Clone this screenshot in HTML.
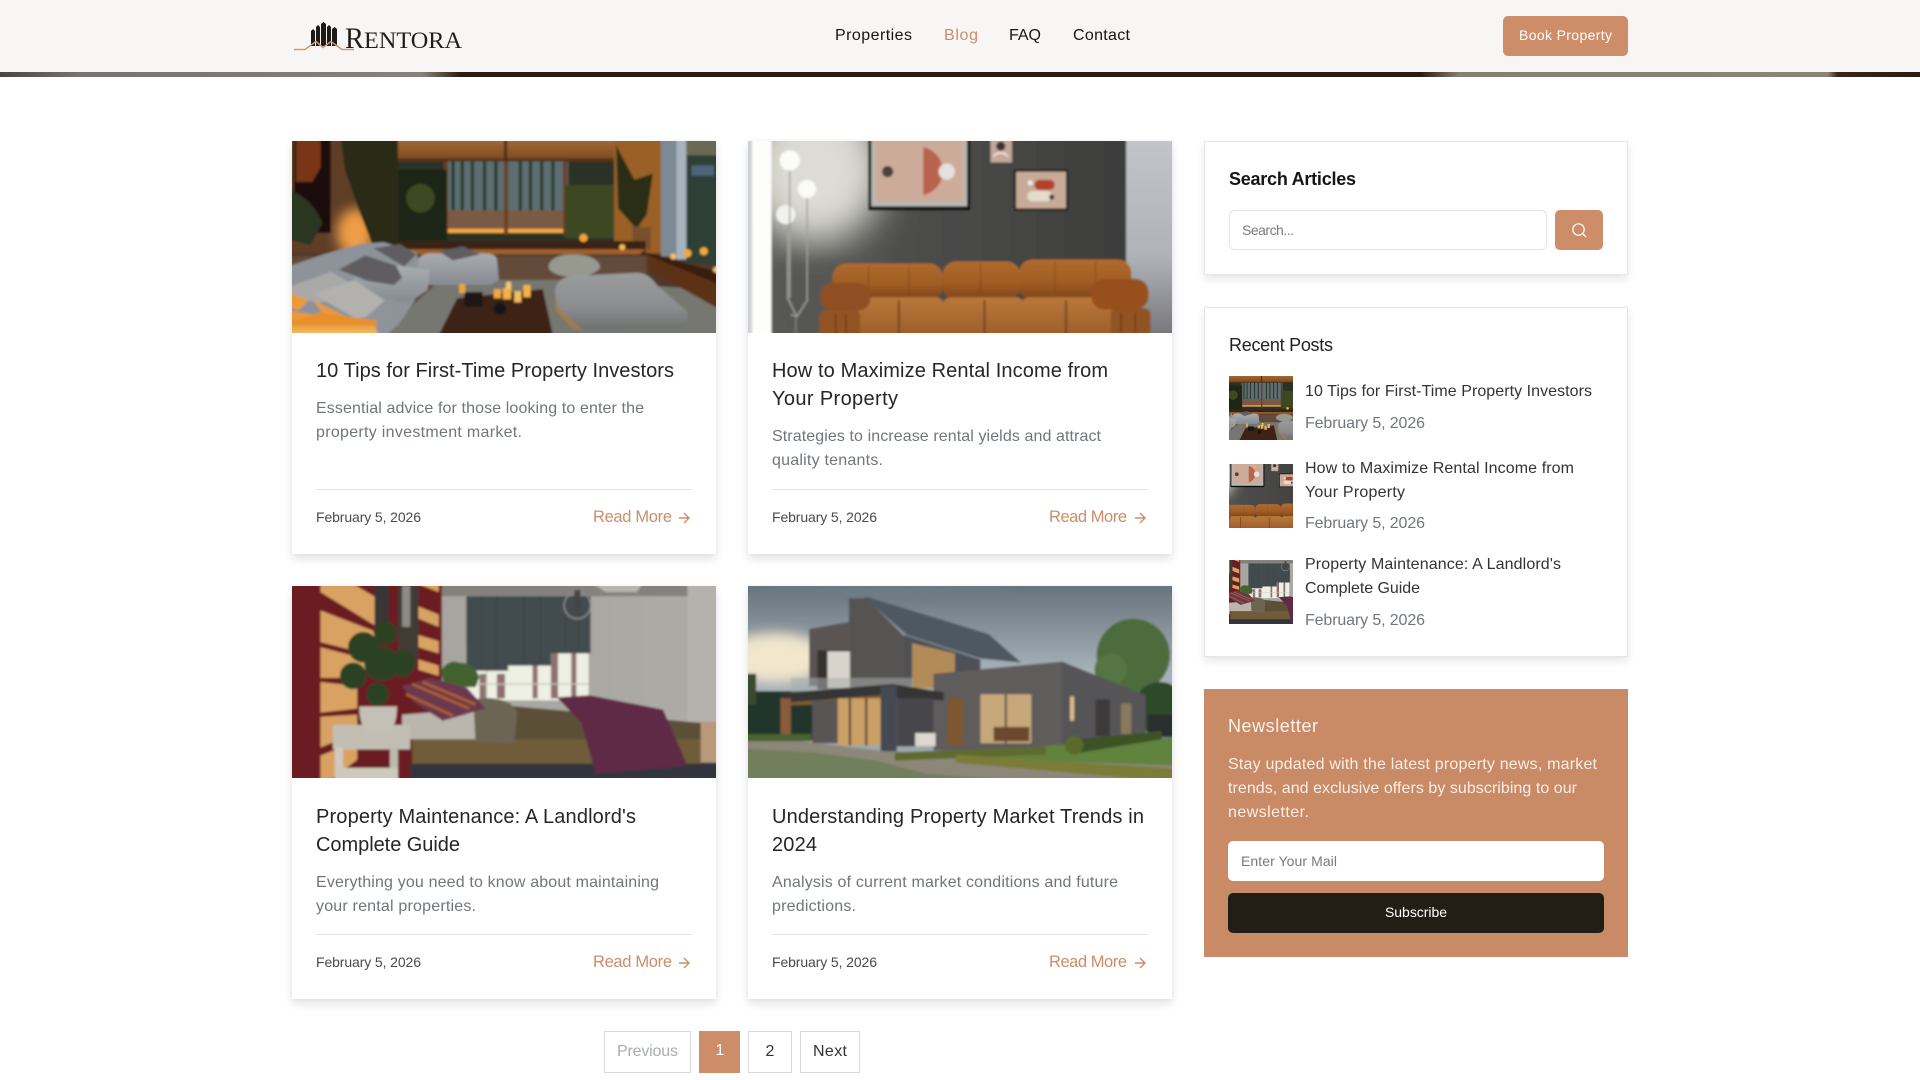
<!DOCTYPE html>
<html lang="en"><head><meta charset="utf-8"><title>Rentora Blog</title>
<style>
html,body{margin:0;padding:0;background:#fff;width:1920px;height:1080px;overflow:hidden}
.b{position:absolute;background:#fff;box-sizing:border-box}
.card{box-shadow:0 5px 9px rgba(0,0,0,.11),0 0 4px rgba(0,0,0,.05)}
.side{border:1px solid #e6e6e6;box-shadow:0 4px 8px rgba(0,0,0,.1)}
svg{position:absolute;left:0;top:0}
text{font-family:"Liberation Sans",sans-serif;white-space:pre}
.t{font-size:20px;fill:#262626}
.d{font-size:16px;fill:#70767c}
.dt{font-size:14px;fill:#4a4a4a}
.r{font-size:16.5px;fill:#cc8d68}
.st{font-size:16px;fill:#333}
.sd{font-size:16px;fill:#72777d}
.n{font-size:16px;fill:#151515}
.w{fill:#fff}
.nl{font-size:16px;fill:#fbeee6}
.ph{font-size:14px;fill:#7a7a7a}
.a{fill:none;stroke:#cc8d68;stroke-width:1.4}
</style></head><body>
<div class="b card" style="left:292px;top:141px;width:424px;height:413px"></div>
<div class="b card" style="left:748px;top:141px;width:424px;height:413px"></div>
<div class="b card" style="left:292px;top:586px;width:424px;height:413px"></div>
<div class="b card" style="left:748px;top:586px;width:424px;height:413px"></div>
<div class="b side" style="left:1204px;top:141px;width:424px;height:134px"></div>
<div class="b side" style="left:1204px;top:307px;width:424px;height:350px"></div>
<svg width="1920" height="1080" viewBox="0 0 1920 1080" xmlns="http://www.w3.org/2000/svg">
<defs>
<filter id="bl" x="-2%" y="-2%" width="104%" height="104%"><feGaussianBlur stdDeviation="1"/></filter>
<filter id="bl3" x="-40%" y="-40%" width="180%" height="180%"><feGaussianBlur stdDeviation="6"/></filter>
<filter id="bl9" x="-60%" y="-60%" width="220%" height="220%"><feGaussianBlur stdDeviation="18"/></filter>
<linearGradient id="strip" x1="0" x2="1" y1="0" y2="0">
<stop offset="0" stop-color="#4a4540"/><stop offset=".04" stop-color="#77736d"/><stop offset=".22" stop-color="#85827b"/><stop offset=".24" stop-color="#2a1c12"/><stop offset=".74" stop-color="#2a1c12"/><stop offset=".76" stop-color="#86806f"/><stop offset=".952" stop-color="#8a8475"/><stop offset=".957" stop-color="#3a2518"/><stop offset="1" stop-color="#2a1c12"/>
</linearGradient>
<linearGradient id="sky" x1="0" x2="0" y1="0" y2="1"><stop offset="0" stop-color="#66727b"/><stop offset=".45" stop-color="#a7b2b9"/><stop offset="1" stop-color="#98a4ac"/></linearGradient>
<linearGradient id="lth" x1="0" x2="0" y1="0" y2="1"><stop offset="0" stop-color="#b06c2e"/><stop offset=".55" stop-color="#a15c24"/><stop offset="1" stop-color="#7d4419"/></linearGradient>
<linearGradient id="lth2" x1="0" x2="0" y1="0" y2="1"><stop offset="0" stop-color="#b9783c"/><stop offset="1" stop-color="#9c5c28"/></linearGradient>
<linearGradient id="sofaL" x1="0" x2="0" y1="0" y2="1"><stop offset="0" stop-color="#e08a30"/><stop offset="1" stop-color="#f7c264"/></linearGradient>
<linearGradient id="blind" x1="0" x2="0" y1="0" y2="1"><stop offset="0" stop-color="#a56a34"/><stop offset="1" stop-color="#7a4a24"/></linearGradient>
<linearGradient id="cush" x1="0" x2="0" y1="0" y2="1"><stop offset="0" stop-color="#9a9c9c"/><stop offset=".6" stop-color="#8b8d8e"/><stop offset="1" stop-color="#6e7072"/></linearGradient>
<linearGradient id="seat" x1="0" x2="0" y1="0" y2="1"><stop offset="0" stop-color="#a9adb0"/><stop offset="1" stop-color="#858b91"/></linearGradient>
<linearGradient id="rightw" x1="0" x2="0" y1="0" y2="1"><stop offset="0" stop-color="#c2c4ca"/><stop offset=".6" stop-color="#b0b2b8"/><stop offset="1" stop-color="#77787c"/></linearGradient>
<linearGradient id="wall2" x1="0" x2="1" y1="0" y2="0"><stop offset="0" stop-color="#5c5c58"/><stop offset=".35" stop-color="#4e4e4c"/><stop offset="1" stop-color="#3d3d3b"/></linearGradient>
<linearGradient id="wallb" x1="0" x2="1" y1="0" y2="0"><stop offset="0" stop-color="#a3a29d"/><stop offset="1" stop-color="#aeaba6"/></linearGradient>

<g id="img1" filter="url(#bl)">
<rect width="424" height="192" fill="#50382a"/>
<rect width="110" height="112" fill="#5e3e28"/>
<ellipse cx="66" cy="92" rx="18" ry="24" fill="#ef9e45" filter="url(#bl3)"/>
<rect x="6" width="36" height="92" fill="#1f110c"/><path d="M8 0h24v28l-8 14H8z" fill="#7a3517"/>
<path d="M0 50q22 6 34 32l-12 22-22-6z" fill="#2c3520"/>
<path d="M52 0h62v60l-6 46H84L70 70 56 30z" fill="#2a2a17"/>
<rect x="108" width="214" height="21" fill="url(#blind)"/><rect x="108" y="19" width="214" height="4" fill="#5a3317"/><rect x="212" width="3" height="24" fill="#4e2c14"/>
<rect x="108" y="22" width="214" height="78" fill="#2a3128"/>
<rect x="155" y="22" width="120" height="50" fill="#5b6e6f"/>
<path d="M162 22v50M171 22v50M181 22v50M193 22v50M204 22v50M214 22v50M228 22v50M238 22v50M249 22v50M260 22v50" stroke="#2b342c" stroke-width="3"/>
<rect x="155" y="70" width="118" height="20" fill="#7a5a44"/>
<rect x="155" y="88" width="120" height="4" fill="#f6aa42"/>
<rect x="153" y="22" width="4" height="72" fill="#6a4022"/><rect x="212" y="22" width="4" height="72" fill="#6a4022"/><rect x="270" y="22" width="4" height="72" fill="#6a4022"/>
<path d="M108 30h48v70h-48z" fill="#1f2614"/><circle cx="130" cy="58" r="14" fill="#3c4a22"/>
<path d="M272 45h48v52h-48z" fill="#3c4624"/>
<rect x="320" width="46" height="112" fill="#9a6128"/>
<path d="M322 6l18 34 18-6-6 40-10 14-18-20z" fill="#2a2d18"/><rect x="338" y="86" width="18" height="22" fill="#7a4f2e"/>
<rect x="366" width="15" height="115" fill="#7d8a95"/><rect x="381" width="10" height="118" fill="#a7b3bd"/><rect x="391" width="33" height="122" fill="#2f3f36"/>
<rect x="391" y="0" width="33" height="16" fill="#6a6a52"/><rect x="396" y="26" width="22" height="10" fill="#4f6478"/>
<path d="M108 100h243v13H108z" fill="#3a2012"/><path d="M108 108h243l-6 5H108z" fill="#a1602a"/>
<path d="M0 115h352v77H0z" fill="#644b3a"/>
<path d="M150 138h115l158 10v44H90z" fill="#74776f"/>
<path d="M352 111l72 32v24l-72-40z" fill="#5c3318"/><path d="M352 111l72 20v12l-72-30z" fill="#3a1f10"/>
<circle cx="378" cy="115" r="3" fill="#f7c060"/><circle cx="392" cy="112" r="4" fill="#f2a83e"/><circle cx="408" cy="110" r="4" fill="#f2a83e"/><circle cx="420" cy="128" r="3" fill="#f6c06a"/><circle cx="328" cy="106" r="3" fill="#f5b85a"/><circle cx="290" cy="97" r="4" fill="#f3a040"/>
<path d="M0 125l35-12 35-10 24-2 32 10 3 12-5 36-15 22-12 11H0z" fill="#8d9399"/>
<path d="M128 117q4-5 12-5h52q12 0 13 6l2 20-8 5h-66l-6-8z" fill="url(#seat)"/>
<path d="M65 130l42-6 32 4-2 20-18 12-54-4z" fill="url(#seat)"/>
<path d="M55 150l52 8-5 22-18 12H48z" fill="#8e9499"/>
<path d="M50 128l26-14 30 10 6 12-8 7-26-4zM84 107l26-4 16 10-12 12zM148 110l24-5 16 8-26 6z" fill="#5e5d60"/>
<path d="M0 145l42-15 26 15-14 8-24 8L0 152z" fill="#a9a9a8"/><path d="M25 152l40-14 30 20-18 16-10 2z" fill="#b3b1ad"/>
<path d="M0 150l20 8-10 10-10-4zM0 168l25 4-16 8H0zM25 158l32 16-2 2-20-4z" fill="#ec9a34"/>
<path d="M0 178h85l3 14H0z" fill="url(#sofaL)"/><path d="M30 170l58 8-2 4H0z" fill="#e88e2a"/>
<path d="M256 123q4-10 24-10t26 10v4q-8 8-26 8t-24-8z" fill="#97988f"/>
<path d="M262 150q0-14 18-16l62-3q12 0 20 12l30 26v12l-5 4-96 2-26-18z" fill="url(#cush)"/>
<path d="M262 148q0 14 6 20l22 20-12-3-16-18z" fill="#a37b4c"/>
<path d="M166 156l84-9 10 45H148z" fill="#3c2418"/>
<rect x="173" y="150" width="18" height="14" fill="#1f1915"/><circle cx="208" cy="166" r="6" fill="#181412"/>
<rect x="168" y="142" width="6" height="9" fill="#f0a43c"/><rect x="202" y="147" width="7" height="9" fill="#f4a83e"/><rect x="211" y="146" width="8" height="11" fill="#f4b04a"/><rect x="222" y="149" width="7" height="11" fill="#f5bd60"/><rect x="231" y="143" width="7" height="12" fill="#f6b24a"/><rect x="214" y="140" width="5" height="7" fill="#f7c870"/>
</g>

<g id="img2" filter="url(#bl)">
<rect width="424" height="192" fill="#c3c5cb"/>
<rect x="375" width="49" height="192" fill="url(#rightw)"/>
<rect x="27" width="348" height="192" fill="url(#wall2)"/>
<ellipse cx="70" cy="30" rx="68" ry="72" fill="#dcdcd4" filter="url(#bl9)"/>
<rect x="27" y="120" width="120" height="72" fill="#575755" opacity=".7" filter="url(#bl3)"/>
<rect x="0" width="8" height="192" fill="#ced1d6"/><rect x="8" width="19" height="192" fill="#fdfdfc"/>
<rect x="122" width="100" height="70" fill="#0d0d0d"/><rect x="125" width="94" height="66" fill="#bab8b4"/><rect x="129" width="86" height="61" fill="#cdab99"/>
<path d="M176 8a24 24 0 0 1 0 47z" fill="#b8644e"/><circle cx="199" cy="32" r="8" fill="#e4e0dd"/><circle cx="141" cy="32" r="5.5" fill="#4c423e"/>
<rect x="242" width="21" height="23" fill="#c5a898"/><circle cx="252" cy="7" r="4.5" fill="#3a3034"/><path d="M245 17q7-7 14 0" stroke="#eee" stroke-width="1.5" fill="none"/>
<rect x="265" y="30" width="53" height="40" fill="#0e0e0e"/><rect x="267" y="32" width="49" height="36" fill="#c7ab98"/><rect x="285" y="40" width="20" height="10" rx="5" fill="#b2432a"/><rect x="278" y="51" width="24" height="10" rx="5" fill="#e3dccc"/><circle cx="281" cy="43" r="2.5" fill="#eee"/><circle cx="302" cy="57" r="2.5" fill="#3a2e2c"/>
<circle cx="45" cy="21" r="10" fill="#fbfbf7"/><circle cx="62" cy="49" r="9" fill="#fbfbf7"/><circle cx="41" cy="74" r="9.5" fill="#f1f1ed"/>
<path d="M45 31v125M62 58v100l-10 16-6-2M43 84v72l9 18" fill="none" stroke="#a2a29e" stroke-width="1.4"/>
<path d="M51 175v17" stroke="#777" stroke-width="2"/>
<rect x="87" y="122" width="108" height="36" rx="13" fill="url(#lth)"/>
<rect x="195" y="120" width="76" height="38" rx="13" fill="url(#lth)"/>
<rect x="270" y="118" width="110" height="40" rx="13" fill="url(#lth)"/>
<path d="M122 124v30M162 124v30M232 122v32M305 120v34M345 120v34" stroke="#7d4619" stroke-width="1.4" opacity=".6"/>
<rect x="112" y="155" width="84" height="40" rx="8" fill="url(#lth2)"/><rect x="195" y="155" width="80" height="40" rx="8" fill="url(#lth2)"/><rect x="272" y="155" width="90" height="40" rx="8" fill="url(#lth2)"/>
<path d="M152 158v34M236 158v34M316 158v34" stroke="#6f3f18" stroke-width="1.8"/>
<rect x="74" y="168" width="40" height="26" rx="5" fill="#925222"/><rect x="360" y="166" width="39" height="28" rx="5" fill="#925222"/>
<rect x="75" y="141" width="49" height="27" rx="12" fill="#8f4f20"/><rect x="341" y="137" width="56" height="30" rx="13" fill="#974f1e"/>
<path d="M90 172v20M100 172v20M370 170v22M384 170v22" stroke="#633613" stroke-width="1.2"/>
</g>

<g id="img3" filter="url(#bl)">
<rect width="424" height="192" fill="url(#wallb)"/>
<rect width="424" height="12" fill="#85827d"/>
<rect x="392" width="32" height="140" fill="#b5b2ad"/>
<rect width="151" height="192" fill="#6a1e21"/>
<path d="M32 0h32l22 13v28L32 8zM32 26l52 20 4 25-56-14zM32 62l46 12-4 18H32zM32 96l36 4v22l-36 4zM32 130l36-2v18l-36 14zM32 168l36-14v18l-26 20H32zM128 0h20v8zM128 22l20 8v12l-20-8zM128 50l20 6v12l-20-6zM128 74l20 6v10l-20-6z" fill="#d9a262"/>
<rect x="85" width="14" height="58" fill="#383434"/><rect x="108" width="20" height="74" fill="#403a36"/><rect x="112" y="2" width="8" height="40" fill="#8e8a86"/>
<rect x="175" y="60" width="120" height="54" fill="#eef0e4"/>
<path d="M188 88h7v24h-7zM205 88h8v24h-8zM240 74h5v38h-5zM258 68h7v44h-7zM278 68h5v44h-5z" fill="#8f7071"/>
<path d="M175 98h120M195 60v52" stroke="#c5c7ba" stroke-width="1.4"/>
<path d="M175 12h41v73h-41zM216 12h42v68h-42zM258 12h39v56h-39z" fill="#434c4d"/>
<path d="M190 12v70M205 12v70M232 12v64M248 12v64M272 12v52M285 12v52" stroke="#3a4243" stroke-width="1"/>
<circle cx="284" cy="21" r="13" fill="none" stroke="#8a8b8e" stroke-width="1.5"/><rect x="281" y="6" width="6" height="20" fill="#444"/>
<path d="M300 0h48l-6 8h-30z" fill="#cfcbc3" opacity=".7"/>
<path d="M150 85q8-12 18-8 14 0 20 14l-4 10h-30z" fill="#43622f"/>
<rect x="392" y="135" width="32" height="40" fill="#b8997a"/>
<rect y="175" x="120" width="304" height="17" fill="#33353c"/>
<path d="M122 150h283v26H122z" fill="#6f5b37"/>
<path d="M180 116l225 20v16H180z" fill="#5c4f38"/>
<path d="M112 128l80-6v30h-80z" fill="#bab6ae"/>
<path d="M182 113q20-4 36 4l7 8-3 32-38-2z" fill="#6c6552"/>
<path d="M264 111l32-2 72 14 24 55-90 8-14-50z" fill="#5e2a44"/>
<path d="M112 100l28-8 36 10 18 20-42 12-28-18z" fill="#6a3750"/>
<path d="M122 98l56 24M132 96l52 22M116 108l46 21" stroke="#b0602c" stroke-width="2.6"/>
<rect x="44" y="138" width="76" height="24" fill="#c2beb4"/><rect x="46" y="160" width="8" height="32" fill="#cfcbc1"/><rect x="100" y="160" width="8" height="32" fill="#bdb9af"/><rect x="46" y="180" width="62" height="12" fill="#cdc9bf"/>
<path d="M70 120h37q0 18-8 26H78q-8-8-8-26z" fill="#c4c0b6"/>
<g fill="#2c4322"><circle cx="74" cy="62" r="15"/><circle cx="96" cy="48" r="11"/><circle cx="64" cy="90" r="13"/><circle cx="112" cy="78" r="13"/><circle cx="92" cy="78" r="17"/><circle cx="88" cy="108" r="11"/></g>
</g>

<g id="img4" filter="url(#bl)">
<rect width="424" height="192" fill="url(#sky)"/>
<ellipse cx="30" cy="72" rx="52" ry="24" fill="#f2e6cc" filter="url(#bl3)"/>
<ellipse cx="140" cy="6" rx="120" ry="7" fill="#6e7b84" filter="url(#bl3)"/>
<rect y="105" width="72" height="48" fill="#24352a"/><rect y="88" width="12" height="30" fill="#3a4a30"/>
<circle cx="382" cy="70" r="36" fill="#4d6c3c"/><circle cx="360" cy="84" r="16" fill="#557442"/><circle cx="408" cy="122" r="26" fill="#2f4a2a"/><rect x="396" y="128" width="28" height="22" fill="#2a2e2e"/>
<path d="M64 44l40-7 0 63H64z" fill="#5a5553"/>
<path d="M103 14h17l37 37v50h-54z" fill="#565352"/>
<path d="M118 13h4l118 36 32 28-40-4-72-23z" fill="#4e5861"/>
<path d="M157 50l75 24v26h-75z" fill="#4f5056"/>
<path d="M165 58l42 10v34h-42z" fill="#b28b58"/>
<path d="M72 65h32v38H72z" fill="#35302e"/><path d="M82 66h22v36H82z" fill="#d8d4cc"/>
<path d="M46 92h120v14H46z" fill="#a8aeac" opacity=".55"/>
<path d="M186 88l126-12 82 33v42l-82 12H186z" fill="#5f5c5b"/>
<path d="M312 76l82 33v42l-82 12z" fill="#545558"/>
<rect x="345" y="113" width="14" height="36" fill="#3c3a38"/><rect x="370" y="117" width="10" height="30" fill="#8a7a5a"/>
<rect x="320" y="110" width="4" height="24" fill="#dcbc8c"/>
<path d="M36 107l110-9 50 8v8l-50-2-110 8z" fill="#353436"/>
<path d="M44 116l100-8v8l-100 3z" fill="#7e5a38"/>
<rect x="67" y="114" width="30" height="42" fill="#585554"/><rect x="92" y="112" width="44" height="46" fill="#caa066"/>
<path d="M104 112v46M120 112v46" stroke="#3c3834" stroke-width="2"/>
<rect x="36" y="112" width="10" height="46" fill="#8a5c3a"/><rect x="134" y="100" width="16" height="64" fill="#454a52"/>
<rect x="150" y="112" width="36" height="47" fill="#47474c"/><rect x="168" y="146" width="20" height="13" fill="#dcd8d0"/>
<rect x="200" y="111" width="15" height="47" fill="#7d5731"/>
<rect x="232" y="108" width="50" height="48" fill="#c7a87a"/><path d="M257 108v48" stroke="#54504a" stroke-width="2"/><rect x="245" y="140" width="35" height="14" fill="#6a4a2e"/>
<path d="M0 154l40-2 100 12 60 2 224 6v20H0z" fill="#8d8779"/>
<path d="M0 161l70 4 60 8 50 13 80 6H0z" fill="#727f5c"/>
<path d="M300 158l124-8v28l-214-8z" fill="#61833c"/>
<path d="M148 165l148-6v8l-148 6z" fill="#5f6b2e"/>
<path d="M208 167l216 14v13l-216-19z" fill="#7a7c38"/>
<path d="M325 152l85-8v8l-85 14z" fill="#3d5228"/><circle cx="324" cy="158" r="9" fill="#5a6a2c"/>
<rect y="147" width="66" height="7" fill="#4c6432"/>
</g>
</defs>

<!-- header -->
<rect width="1920" height="72" fill="#f7f6f4"/>
<rect y="72" width="1920" height="5" fill="url(#strip)"/>
<path d="M311 46V31l2-2 2 2v15zM316 46V27l2-2 2 2v19zM321 46V24l2.500-2 2.500 2v22zM327 46V27l2-2 2 2v19zM332 46V29l2.500-2 2.500 2v17z" fill="#1d1a17"/>
<path d="M294 49.500h11l11-8 7 6 8-6 11 8h12" fill="none" stroke="#d09a78" stroke-width="1.5"/>
<text x="345" y="48" lengthAdjust="spacingAndGlyphs" style="font-family:'Liberation Serif',serif;font-size:30px;fill:#201d1a" textLength="19">R</text>
<text x="364" y="48" lengthAdjust="spacingAndGlyphs" style="font-family:'Liberation Serif',serif;font-size:23px;fill:#201d1a" textLength="98">ENTORA</text>
<text class="n" x="835" y="40" textLength="77">Properties</text>
<text class="n" x="944" y="40" textLength="34" style="fill:#cc8d68">Blog</text>
<text class="n" x="1009" y="40" textLength="32">FAQ</text>
<text class="n" x="1073" y="40" textLength="57">Contact</text>
<rect x="1503" y="16" width="125" height="40" rx="5" fill="#cc8d68"/>
<text class="w" x="1519" y="40" textLength="93" style="font-size:14px">Book Property</text>

<!-- images -->
<svg x="292" y="141" width="424" height="192" viewBox="4 2 416 188" preserveAspectRatio="none"><use href="#img1"/></svg>
<svg x="748" y="141" width="424" height="192" viewBox="4 2 416 188" preserveAspectRatio="none"><use href="#img2"/></svg>
<svg x="292" y="586" width="424" height="192" viewBox="4 2 416 188" preserveAspectRatio="none"><use href="#img3"/></svg>
<svg x="748" y="586" width="424" height="192" viewBox="4 2 416 188" preserveAspectRatio="none"><use href="#img4"/></svg>
<svg x="1229" y="376" width="64" height="64" viewBox="118 2 188 188"><use href="#img1"/></svg>
<svg x="1229" y="464" width="64" height="64" viewBox="118 2 188 188"><use href="#img2"/></svg>
<svg x="1229" y="560" width="64" height="64" viewBox="118 2 188 188"><use href="#img3"/></svg>

<!-- card 1 -->
<text class="t" x="316" y="377" textLength="358">10 Tips for First-Time Property Investors</text>
<text class="d" x="316" y="413" textLength="328">Essential advice for those looking to enter the</text>
<text class="d" x="316" y="437" textLength="206">property investment market.</text>
<rect x="316" y="489" width="376" height="1" fill="#e4e4e4"/>
<text class="dt" x="316" y="522" textLength="105">February 5, 2026</text>
<text class="r" x="593" y="522" textLength="79">Read More</text>
<path class="a" d="M679 518h10M684 513l5 5-5 5"/>
<!-- card 2 -->
<text class="t" x="772" y="377" textLength="336">How to Maximize Rental Income from</text>
<text class="t" x="772" y="405" textLength="126">Your Property</text>
<text class="d" x="772" y="441" textLength="329">Strategies to increase rental yields and attract</text>
<text class="d" x="772" y="465" textLength="111">quality tenants.</text>
<rect x="772" y="489" width="376" height="1" fill="#e4e4e4"/>
<text class="dt" x="772" y="522" textLength="105">February 5, 2026</text>
<text class="r" x="1049" y="522" textLength="78">Read More</text>
<path class="a" d="M1135 518h10M1140 513l5 5-5 5"/>
<!-- card 3 -->
<text class="t" x="316" y="823" textLength="320">Property Maintenance: A Landlord's</text>
<text class="t" x="316" y="851" textLength="144">Complete Guide</text>
<text class="d" x="316" y="887" textLength="343">Everything you need to know about maintaining</text>
<text class="d" x="316" y="911" textLength="160">your rental properties.</text>
<rect x="316" y="934" width="376" height="1" fill="#e4e4e4"/>
<text class="dt" x="316" y="967" textLength="105">February 5, 2026</text>
<text class="r" x="593" y="967" textLength="79">Read More</text>
<path class="a" d="M679 963h10M684 958l5 5-5 5"/>
<!-- card 4 -->
<text class="t" x="772" y="823" textLength="372">Understanding Property Market Trends in</text>
<text class="t" x="772" y="851" textLength="45">2024</text>
<text class="d" x="772" y="887" textLength="346">Analysis of current market conditions and future</text>
<text class="d" x="772" y="911" textLength="84">predictions.</text>
<rect x="772" y="934" width="376" height="1" fill="#e4e4e4"/>
<text class="dt" x="772" y="967" textLength="105">February 5, 2026</text>
<text class="r" x="1049" y="967" textLength="78">Read More</text>
<path class="a" d="M1135 963h10M1140 958l5 5-5 5"/>

<!-- pagination -->
<rect x="604.5" y="1031.500" width="86" height="41" fill="#fff" stroke="#d9d9d9"/>
<text x="617" y="1056" textLength="61" style="font-size:16px;fill:#a9adb1">Previous</text>
<rect x="699" y="1031" width="41" height="42" fill="#cc8d68"/>
<text class="w" x="720" y="1055" text-anchor="middle" style="font-size:16px">1</text>
<rect x="748.5" y="1031.500" width="43" height="41" fill="#fff" stroke="#d9d9d9"/>
<text x="770" y="1056" text-anchor="middle" style="font-size:16px;fill:#333">2</text>
<rect x="800.5" y="1031.500" width="59" height="41" fill="#fff" stroke="#d9d9d9"/>
<text x="813" y="1056" textLength="34" style="font-size:16px;fill:#333">Next</text>

<!-- search -->
<text x="1229" y="185" textLength="127" style="font-size:18px;font-weight:bold;fill:#151515">Search Articles</text>
<rect x="1229.5" y="210.500" width="317" height="39" rx="5" fill="#fff" stroke="#e4e4e4"/>
<text class="ph" x="1242" y="235" textLength="52">Search...</text>
<rect x="1555" y="210" width="48" height="40" rx="5" fill="#cc8d68"/>
<circle cx="1578.5" cy="229.500" r="5.700" fill="none" stroke="#fff" stroke-width="1.2"/>
<path d="M1583 234l3 3" stroke="#fff" stroke-width="1.3"/>

<!-- recent -->
<text x="1229" y="351" textLength="104" style="font-size:18px;fill:#222">Recent Posts</text>
<text class="st" x="1305" y="396" textLength="287">10 Tips for First-Time Property Investors</text>
<text class="sd" x="1305" y="428" textLength="120">February 5, 2026</text>
<text class="st" x="1305" y="473" textLength="269">How to Maximize Rental Income from</text>
<text class="st" x="1305" y="497" textLength="100">Your Property</text>
<text class="sd" x="1305" y="528" textLength="120">February 5, 2026</text>
<text class="st" x="1305" y="569" textLength="256">Property Maintenance: A Landlord's</text>
<text class="st" x="1305" y="593" textLength="115">Complete Guide</text>
<text class="sd" x="1305" y="625" textLength="120">February 5, 2026</text>

<!-- newsletter -->
<rect x="1204" y="689" width="424" height="268" fill="#c98a66"/>
<text x="1228" y="732" textLength="90" style="font-size:18px;fill:#fdf3ec">Newsletter</text>
<text class="nl" x="1228" y="769" textLength="369">Stay updated with the latest property news, market</text>
<text class="nl" x="1228" y="793" textLength="349">trends, and exclusive offers by subscribing to our</text>
<text class="nl" x="1228" y="817" textLength="81">newsletter.</text>
<rect x="1228" y="841" width="376" height="40" rx="5" fill="#fff"/>
<text class="ph" x="1241" y="866" textLength="96">Enter Your Mail</text>
<rect x="1228" y="893" width="376" height="40" rx="5" fill="#231e15"/>
<text class="w" x="1385" y="917" textLength="62" style="font-size:14px">Subscribe</text>
</svg>
</body></html>
